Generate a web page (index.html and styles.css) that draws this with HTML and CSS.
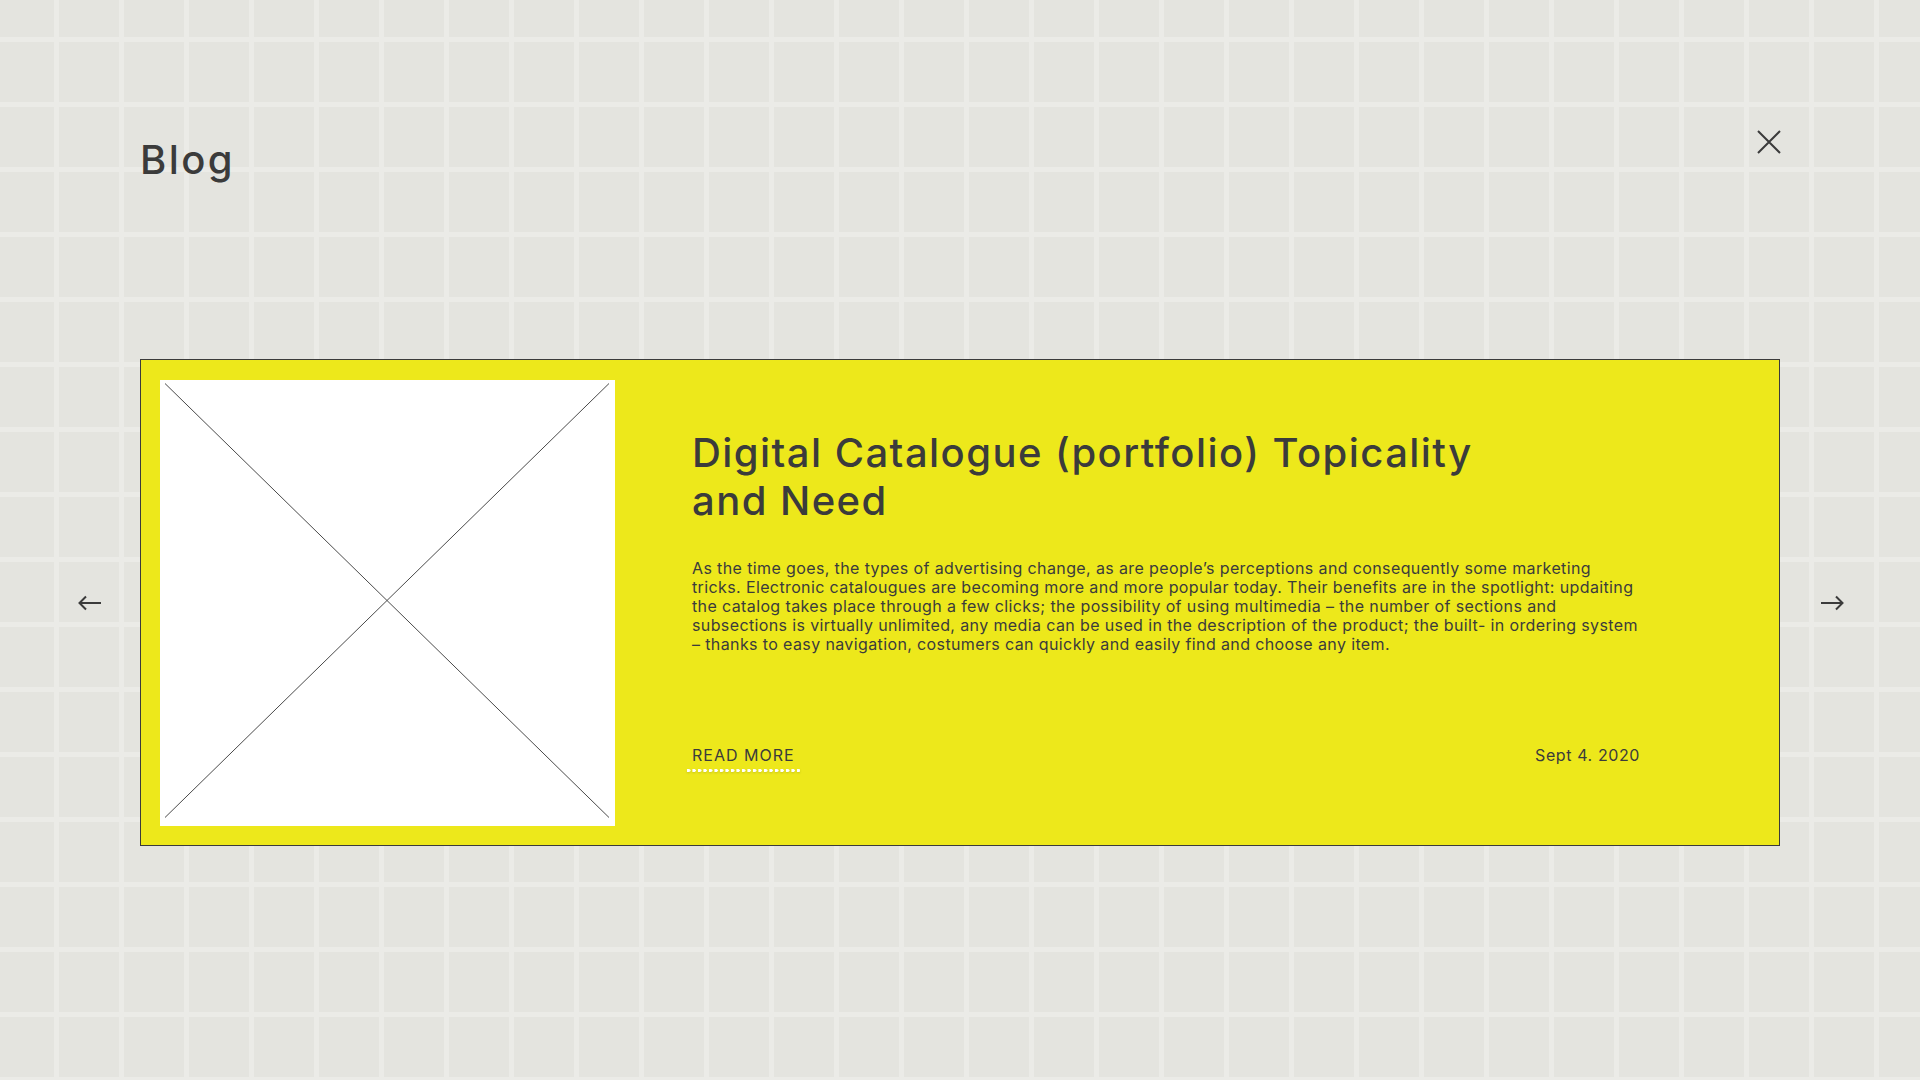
FILE: index.html
```html
<!DOCTYPE html>
<html lang="en">
<head>
<meta charset="utf-8">
<title>Blog</title>
<link rel="stylesheet" href="styles.css">
</head>
<body>
<div class="page">
  <header class="header">
    <h1 class="page-title">Blog</h1>
    <button class="close" aria-label="Close">
      <svg width="24" height="24" viewBox="0 0 24 24"><path d="M1 1 L23 23 M23 1 L1 23" stroke="#3b3b3b" stroke-width="2" fill="none"/></svg>
    </button>
  </header>
  <section class="slider">
    <button class="nav nav-prev" aria-label="Previous">
      <svg width="24" height="16" viewBox="0 0 24 16"><path d="M23 8 H2 M8 1.5 L1.5 8 L8 14.5" stroke="#3b3b3b" stroke-width="2" fill="none"/></svg>
    </button>
    <article class="card">
      <div class="thumb">
        <svg class="thumb-x" viewBox="0 0 455 446" preserveAspectRatio="none"><path d="M5 3.5 L449 437.5 M449 3.5 L5 437.5" stroke="#4a4a4a" stroke-width="1" fill="none"/></svg>
      </div>
      <div class="content">
        <h2 class="post-title">Digital Catalogue (portfolio) Topicality and Need</h2>
        <p class="post-text">As the time goes, the types of advertising change, as are people’s perceptions and consequently some marketing<br>
tricks. Electronic catalougues are becoming more and more popular today. Their benefits are in the spotlight: updaiting<br>
the catalog takes place through a few clicks; the possibility of using multimedia – the number of sections and<br>
subsections is virtually unlimited, any media can be used in the description of the product; the built- in ordering system<br>
– thanks to easy navigation, costumers can quickly and easily find and choose any item.</p>
        <div class="post-footer">
          <a class="read-more" href="#">READ MORE</a>
          <span class="post-date">Sept 4. 2020</span>
        </div>
      </div>
    </article>
    <button class="nav nav-next" aria-label="Next">
      <svg width="24" height="16" viewBox="0 0 24 16"><path d="M1 8 H22 M16 1.5 L22.5 8 L16 14.5" stroke="#3b3b3b" stroke-width="2" fill="none"/></svg>
    </button>
  </section>
</div>
</body>
</html>
```
FILE: styles.css
```css
html, body {
  margin: 0;
  padding: 0;
  min-height: 100%;
}
body {
  min-height: 1080px;
  background-color: #e4e4df;
  background-image:
    linear-gradient(to right, #ebebe7 5px, transparent 5px),
    linear-gradient(to bottom, #ebebe7 5px, transparent 5px);
  background-size: 65px 65px;
  background-position: 54px 37px;
  font-family: Inter, "Noto Sans", sans-serif;
  color: #3b3b3b;
}
.page {
  display: flex;
  flex-direction: column;
}
.header {
  display: flex;
  justify-content: space-between;
  align-items: flex-start;
  margin: 0 139px 0 140px;
  padding-top: 130px;
}
.page-title {
  margin: 6px 0 0;
  font-size: 40px;
  line-height: 48px;
  font-weight: 500;
  letter-spacing: 2.4px;
}
.close {
  border: 0;
  background: none;
  padding: 0;
  width: 24px;
  height: 24px;
  cursor: pointer;
}
.close svg { display: block; }
.slider {
  display: flex;
  align-items: center;
  margin-top: 175px;
}
.nav {
  border: 0;
  background: none;
  padding: 0;
  width: 24px;
  height: 16px;
  cursor: pointer;
}
.nav svg { display: block; }
.nav-prev { margin-left: 78px; margin-right: 38px; }
.nav-next { margin-left: 40px; }
.card {
  box-sizing: border-box;
  width: 1640px;
  height: 487px;
  border: 1px solid #3b3b3b;
  background: #ede81b;
  padding: 20px 19px;
  display: flex;
  align-items: flex-start;
}
.thumb {
  width: 455px;
  height: 446px;
  background: #fff;
  flex: none;
}
.thumb-x {
  display: block;
  width: 100%;
  height: 100%;
}
.content {
  margin-left: 77px;
  width: 960px;
  display: flex;
  flex-direction: column;
}
.post-title {
  margin: 49px 0 0;
  font-size: 40px;
  line-height: 48px;
  font-weight: 500;
  letter-spacing: 1.45px;
  width: 820px;
}
.post-text {
  margin: 34px 0 0;
  font-size: 16px;
  line-height: 19px;
  font-weight: 400;
  letter-spacing: 0.38px;
  white-space: nowrap;
}
.post-footer {
  display: flex;
  justify-content: space-between;
  align-items: flex-start;
  width: 948px;
  margin-top: 91px;
  font-size: 16px;
  line-height: 20px;
}
.read-more {
  color: #3b3b3b;
  text-decoration: none;
  letter-spacing: 1px;
  display: flex;
  flex-direction: column;
}
.read-more::after {
  content: "";
  display: block;
  height: 5px;
  margin: 3px -5px 0 -6px;
  background-image: radial-gradient(circle at 2.5px 2.5px, #fff 1.6px, transparent 2px);
  background-size: 5.5px 5px;
  background-repeat: repeat-x;
  filter: drop-shadow(0 1px 1px rgba(0,0,0,0.15));
}
.post-date {
  color: #3b3b3b;
  letter-spacing: 0.6px;
}
```
